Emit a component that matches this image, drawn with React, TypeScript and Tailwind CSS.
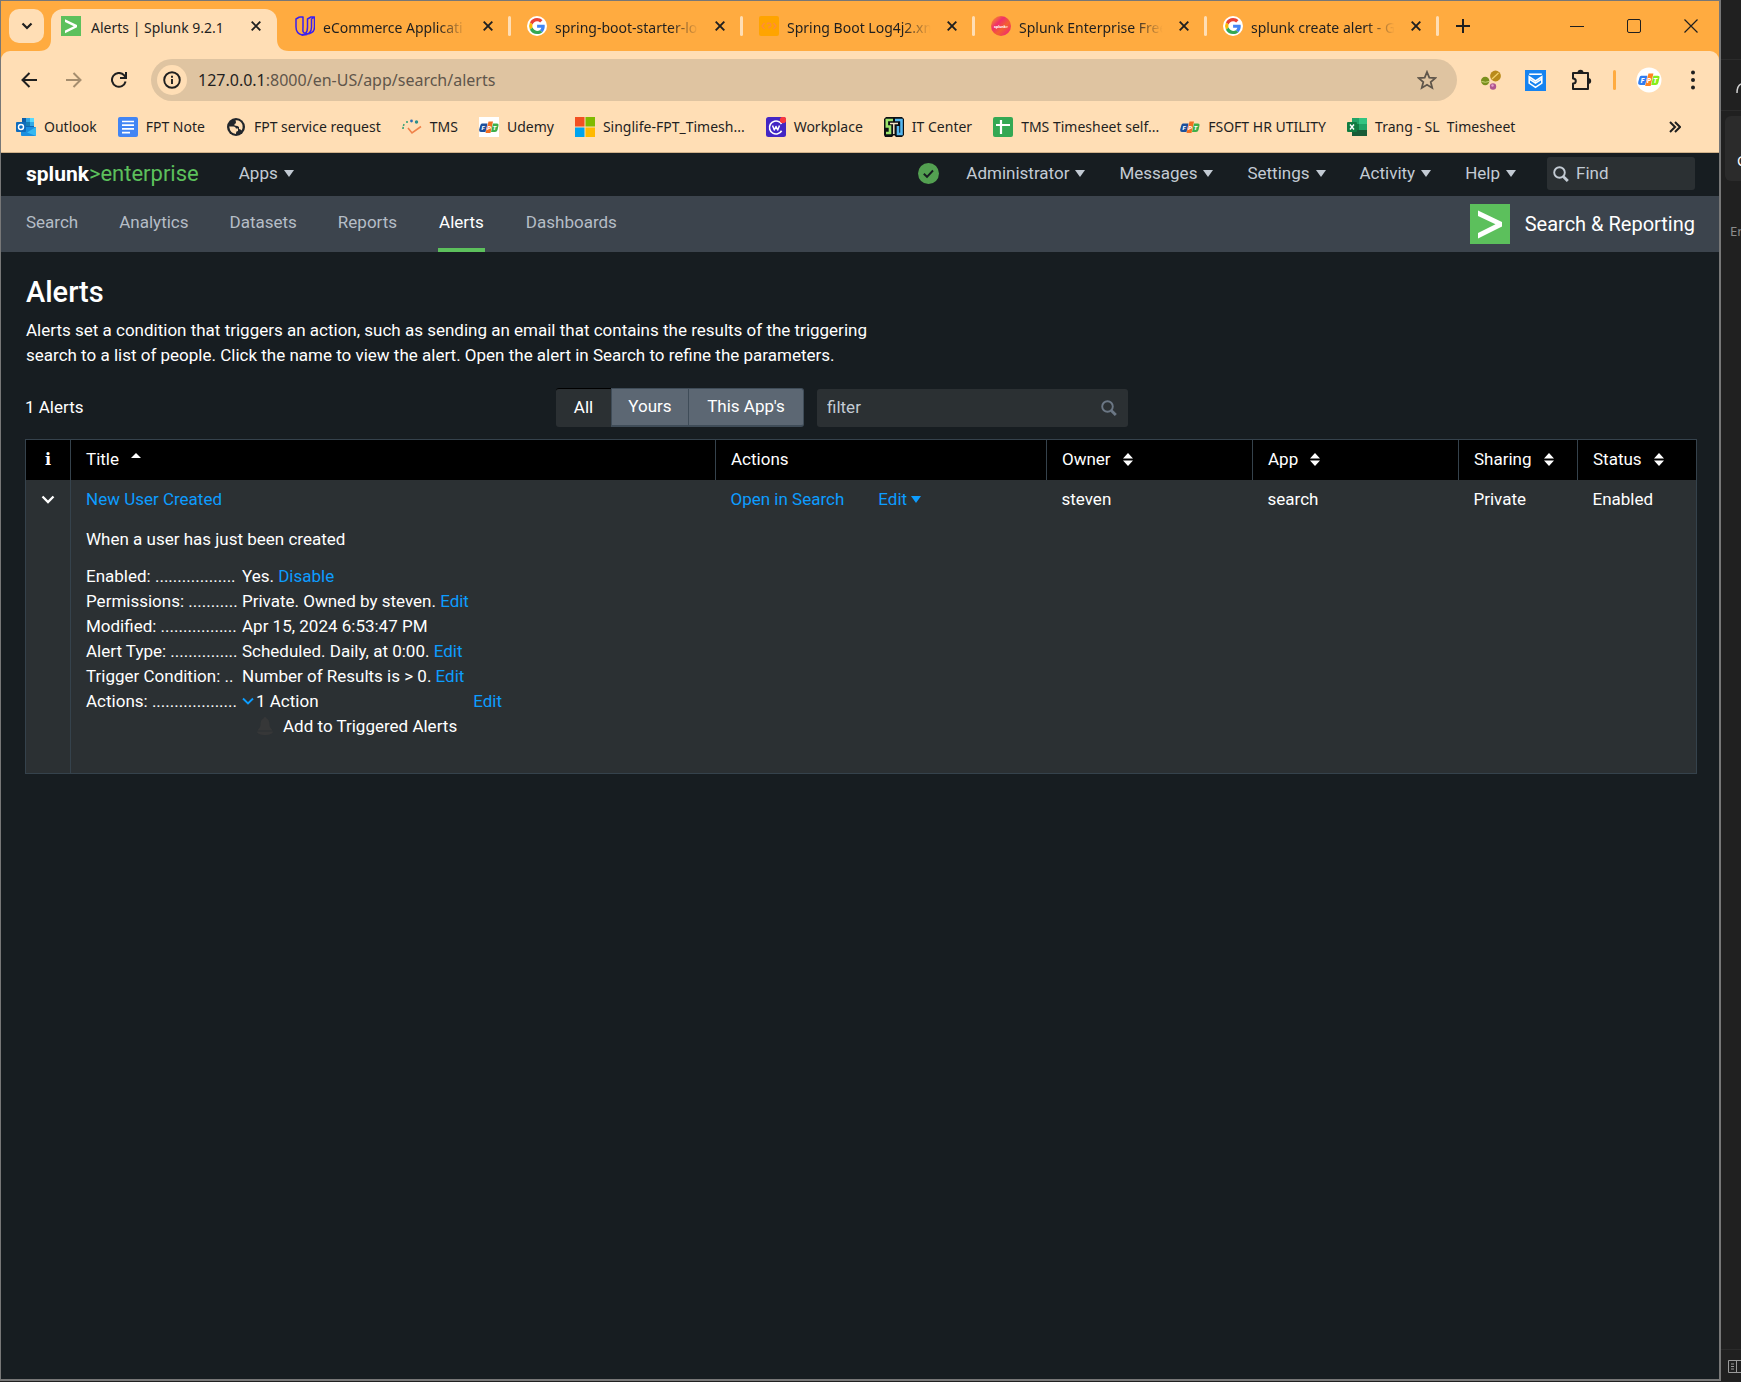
import type { ReactNode } from "react";

type Svg = { className?: string };

/* ---------- favicons and browser glyphs ---------- */

function SplunkIcon({ className }: Svg) {
  return (
    <svg viewBox="0 0 40 40" className={className} aria-hidden="true">
      <rect width="40" height="40" fill="#5cc05c" />
      <path d="M8 6.500 32 18v4.500L8 34.500v-5.500L25.500 20.300 8 12z" fill="#fff" />
    </svg>
  );
}

function UdacityIcon({ className }: Svg) {
  return (
    <svg viewBox="0 0 20 20" className={className} fill="none" stroke="#3a1ff0" strokeWidth="1.500" strokeLinejoin="round" aria-hidden="true">
      <path d="M4.500 1 1 3v8c0 4 2.500 7 6 8l3.500-1.800C7 16.500 8 14.500 8 10.500V1H4.500" />
      <path d="M7 19c7 .5 9.500-3.500 9.500-7.800V3L19.500 1H16l-3.500 2v8c0 3-.5 5-2 6.200M19.500 1v10c0 4-3 7-9 7" />
    </svg>
  );
}

function GoogleIcon({ className }: Svg) {
  return (
    <svg viewBox="0 0 48 48" className={className} aria-hidden="true">
      <circle cx="24" cy="24" r="24" fill="#fff" />
      <g transform="translate(5 5) scale(0.8)">
        <path fill="#EA4335" d="M24 9.500c3.500 0 6.700 1.200 9.200 3.600l6.900-6.900C35.900 2.400 30.500 0 24 0 14.600 0 6.500 5.400 2.600 13.200l8 6.200C12.400 13.700 17.700 9.500 24 9.500z" />
        <path fill="#4285F4" d="M47 24.600c0-1.600-.2-3.100-.4-4.600H24v9h12.900c-.6 3-2.300 5.500-4.800 7.200l7.700 6C44.400 38 47 31.800 47 24.600z" />
        <path fill="#FBBC05" d="M10.500 28.600A14.500 14.500 0 0 1 10.500 19.400l-8-6.200a24 24 0 0 0 0 21.600z" />
        <path fill="#34A853" d="M24 48c6.500 0 11.900-2.100 15.900-5.800l-7.700-6c-2.200 1.500-4.900 2.300-8.200 2.300-6.300 0-11.600-4.200-13.500-9.900l-8 6.200C6.500 42.600 14.600 48 24 48z" />
      </g>
    </svg>
  );
}

function CodeIcon({ className }: Svg) {
  return (
    <svg viewBox="0 0 20 20" className={className} aria-hidden="true">
      <rect width="20" height="20" rx="2" fill="#ffa400" />
      <g fill="none" stroke="#ff8c3c" strokeWidth="1.300">
        <path d="M5.500 7 3 10l2.500 3M14.500 7l2.500 3-2.500 3M8 8.500a2 2 0 1 1 2 2.500v1.500" />
      </g>
    </svg>
  );
}

function SplunkRoundIcon({ className }: Svg) {
  return (
    <svg viewBox="0 0 20 20" className={className} aria-hidden="true">
      <defs>
        <linearGradient id="splunk-round" x1="0" y1="0" x2="1" y2="1">
          <stop offset="0.050" stopColor="#f99d1c" />
          <stop offset="0.350" stopColor="#f0306a" />
          <stop offset="0.600" stopColor="#f4602f" />
          <stop offset="1" stopColor="#f0148c" />
        </linearGradient>
      </defs>
      <circle cx="10" cy="10" r="10" fill="url(#splunk-round)" />
      <text x="10" y="11.500" fontSize="4" fontWeight="700" fill="#fff" textAnchor="middle" fontFamily="Roboto">splunk&gt;</text>
    </svg>
  );
}

function OutlookIcon({ className }: Svg) {
  return (
    <svg viewBox="0 0 20 20" className={className} aria-hidden="true">
      <rect x="6" y="1" width="12" height="10" fill="#1066b5" />
      <rect x="6" y="1" width="4" height="5" fill="#0f5ea8" />
      <rect x="10" y="1" width="4" height="4" fill="#32a9e7" />
      <rect x="14" y="1" width="4" height="4" fill="#58d9fd" />
      <rect x="10" y="5" width="4" height="4" fill="#167eb4" />
      <rect x="14" y="5" width="4" height="4" fill="#32a9e7" />
      <path d="M5 10h15v8a1 1 0 0 1-1 1H6a1 1 0 0 1-1-1z" fill="#1b8fe0" />
      <path d="m20 10-9 5.500L20 19z" fill="#35b8f1" />
      <rect x="0" y="5" width="10" height="10" rx="1" fill="#0f6cbd" />
      <circle cx="5" cy="10" r="2.500" fill="none" stroke="#fff" strokeWidth="1.400" />
    </svg>
  );
}

function DocsIcon({ className }: Svg) {
  return (
    <svg viewBox="0 0 20 20" className={className} aria-hidden="true">
      <rect width="20" height="20" rx="2" fill="#4285f4" />
      <path d="M4 4.500h12M4 8.200h12M4 11.900h12M4 15.600h8" stroke="#fff" strokeWidth="1.700" />
    </svg>
  );
}

function GlobeIcon({ className }: Svg) {
  return (
    <svg viewBox="0 0 20 20" className={className} aria-hidden="true">
      <circle cx="10" cy="10" r="9" fill="#22262b" />
      <path d="M3.200 9.500h4.300q2 0 2.500 2h2v2.500q-2 0-2 2v1Q4 16.500 3.200 9.500zM9.500 3.300q5.500-.3 7 4.700.6 3.500-.8 5.500-1-1.500-2.700-1.500v-2q-1-1.500-4.500-1.500V7q1.500 0 1.500-1.700z" fill="#ffdeb5" />
    </svg>
  );
}

function TmsIcon({ className }: Svg) {
  return (
    <svg viewBox="0 0 20 20" className={className} fill="none" aria-hidden="true">
      <path d="M1 12c0-2 .5-4 1.500-5.500" stroke="#2e9e73" strokeWidth="1.500" strokeDasharray="2 1" />
      <circle cx="5" cy="5" r="1" fill="#2e9e73" />
      <circle cx="9.500" cy="4" r="1.400" fill="#2f6fb3" />
      <circle cx="14.500" cy="5" r="1.700" fill="#2b8f8a" />
      <path d="m6 11 4 5 9-6.500" stroke="#f0824a" strokeWidth="1.600" />
    </svg>
  );
}

function FptMark({ bright }: { bright?: boolean }) {
  return (
    <>
      <path d="M3 6.500h5.500L6.500 15H2.500Q-.5 15 .3 12l1-3.500Q1.700 6.500 3 6.500z" fill={bright ? "#2f7cf0" : "#1b4f9c"} />
      <path d="M9.500 4.500H14L11.500 16H6.500z" fill={bright ? "#ff8420" : "#f26f21"} />
      <path d="M14 6.500h4q2 0 1.500 2l-1 4.500q-.5 2-2.500 2h-4z" fill={bright ? "#86ee1c" : "#3fae49"} />
      <g fontFamily="Roboto" fontStyle="italic" fontWeight="900" fontSize="6" fill="#fff">
        <text x="2.500" y="12.800">F</text>
        <text x="8.200" y="12.800">P</text>
        <text x="13.800" y="12.800">T</text>
      </g>
    </>
  );
}

function FptIcon({ className, plate }: Svg & { plate?: boolean }) {
  return (
    <svg viewBox="0 0 20 20" className={className} aria-hidden="true">
      {plate && <rect width="20" height="20" fill="#fff" />}
      <FptMark />
    </svg>
  );
}

function MicrosoftIcon({ className }: Svg) {
  return (
    <svg viewBox="0 0 20 20" className={className} aria-hidden="true">
      <rect width="9.500" height="9.500" fill="#f25022" />
      <rect x="10.500" width="9.500" height="9.500" fill="#7fba00" />
      <rect y="10.500" width="9.500" height="9.500" fill="#00a4ef" />
      <rect x="10.500" y="10.500" width="9.500" height="9.500" fill="#ffb900" />
    </svg>
  );
}

function WorkplaceIcon({ className }: Svg) {
  return (
    <svg viewBox="0 0 20 20" className={className} aria-hidden="true">
      <rect width="20" height="20" rx="2.500" fill="#4326c4" />
      <circle cx="10" cy="10.500" r="6.500" fill="none" stroke="#fff" strokeWidth="1.600" strokeDasharray="33 8" transform="rotate(30 10 10.500)" />
      <path d="m6.500 8.500 1.800 4.500L10 9.500l1.700 3.500 1.800-4.500" fill="none" stroke="#fff" strokeWidth="1.500" strokeLinejoin="round" />
      <circle cx="17" cy="3" r="3.200" fill="#fa383e" />
    </svg>
  );
}

function ItCenterIcon({ className }: Svg) {
  return (
    <svg viewBox="0 0 20 20" className={className} fill="none" aria-hidden="true">
      <path d="M2 0h16l2 2v16l-2 2h-6l-2-2-2 2H1l-1-2V2z" fill="#0c0f12" />
      <path d="M9 3H2.800v6.500H6V16H2" stroke="#9be36b" strokeWidth="2.600" />
      <path d="M11 3h6.500v14H14V9" stroke="#56b7f0" strokeWidth="2.600" />
      <path d="M6 6.500h8M9.800 7v10" stroke="#f2e3c6" strokeWidth="1.500" />
    </svg>
  );
}

function SheetIcon({ className }: Svg) {
  return (
    <svg viewBox="0 0 20 20" className={className} aria-hidden="true">
      <rect width="20" height="20" rx="2" fill="#34a853" />
      <path d="M8 3v14M3 8h14" stroke="#fff" strokeWidth="2.200" />
    </svg>
  );
}

function ExcelIcon({ className }: Svg) {
  return (
    <svg viewBox="0 0 20 20" className={className} aria-hidden="true">
      <path d="M5 1h8v6H5z" fill="#21a366" />
      <path d="M12 1h8v6h-8z" fill="#33c481" />
      <path d="M5 7h8v6H5z" fill="#107c41" />
      <path d="M12 7h8v6h-8z" fill="#21a366" />
      <path d="M5 13h15v6H5z" fill="#185c37" />
      <rect y="5" width="10" height="10" rx="1" fill="#107c41" />
      <path d="m3 7.500 4 5M7 7.500l-4 5" stroke="#fff" strokeWidth="1.400" />
    </svg>
  );
}

function Cross({ className }: Svg) {
  return (
    <svg viewBox="0 0 10 10" className={className} fill="none" stroke="#1f1f1f" strokeWidth="1.900" aria-hidden="true">
      <path d="m.7.7 8.600 8.600M9.300.7.7 9.300" />
    </svg>
  );
}

function Caret() {
  return (
    <svg viewBox="0 0 10 7" className="h-[7px] w-[10px]" fill="currentColor" aria-hidden="true">
      <path d="M0 0h10L5 7z" />
    </svg>
  );
}

function SearchGlyph({ className }: Svg) {
  return (
    <svg viewBox="0 0 16 16" className={className} fill="none" stroke="currentColor" aria-hidden="true">
      <circle cx="6.500" cy="6.500" r="5.300" strokeWidth="1.900" />
      <path d="m10.500 10.800 4.300 4.200" strokeWidth="2.900" />
    </svg>
  );
}

function SortGlyph() {
  return (
    <svg viewBox="0 0 10 13" className="h-[13px] w-[10px]" fill="currentColor" aria-hidden="true">
      <path d="M0 5.500 5 0l5 5.500zM0 7.500h10L5 13z" />
    </svg>
  );
}

/* ---------- browser chrome ---------- */

const tabs: { title: string; icon: ReactNode }[] = [
  { title: "eCommerce Applicati", icon: <UdacityIcon className="size-5" /> },
  { title: "spring-boot-starter-lo", icon: <GoogleIcon className="size-5" /> },
  { title: "Spring Boot Log4j2.xm", icon: <CodeIcon className="size-5" /> },
  { title: "Splunk Enterprise Free", icon: <SplunkRoundIcon className="size-5" /> },
  { title: "splunk create alert - G", icon: <GoogleIcon className="size-5" /> },
];

function TabStrip() {
  return (
    <div className="flex h-[50px] bg-[#ffab40] pt-2 pl-2">
      <button aria-label="Search tabs" className="flex h-[34px] w-[35px] shrink-0 items-center justify-center rounded-[10px] bg-[#ffdeb5]">
        <svg viewBox="0 0 12 8" className="h-2 w-3" fill="none" stroke="#1f1f1f" strokeWidth="2.200" aria-hidden="true">
          <path d="m1.500 1.500 4.500 4.500 4.500-4.500" />
        </svg>
      </button>
      <div className="relative ml-[7px] flex h-[42px] w-[226px] shrink-0 items-center rounded-t-[12px] bg-[#ffdeb5] pr-3 pb-2 pl-[10px]">
        <svg viewBox="0 0 12 12" className="absolute bottom-0 -left-3 size-3" fill="#ffdeb5" aria-hidden="true"><path d="M12 0v12H0Q12 12 12 0z" /></svg>
        <svg viewBox="0 0 12 12" className="absolute -right-3 bottom-0 size-3" fill="#ffdeb5" aria-hidden="true"><path d="M0 0v12h12Q0 12 0 0z" /></svg>
        <SplunkIcon className="size-5 shrink-0" />
        <span className="ml-[10px] flex-1 pt-[3px] whitespace-nowrap text-[14px] leading-5">Alerts | Splunk 9.2.1</span>
        <button aria-label="Close tab" className="p-1"><Cross className="size-[10px]" /></button>
      </div>
      {tabs.map((t) => (
        <div key={t.title} className="flex h-[34px] w-[232px] shrink items-center pl-[18px]">
          <span className="shrink-0">{t.icon}</span>
          <span className="ml-2 w-[148px] shrink-0 pt-[3px] whitespace-nowrap text-[14px] leading-5 [mask-image:linear-gradient(to_right,black_78%,transparent_97%)]">
            {t.title}
          </span>
          <button aria-label={`Close ${t.title}`} className="ml-2 p-1"><Cross className="size-[10px]" /></button>
          <span className="-mr-[2px] ml-auto h-5 w-[3px] rounded bg-[#ffdeb5]" />
        </div>
      ))}
      <button aria-label="New tab" className="ml-[14px] flex h-[34px] w-6 items-center justify-center">
        <svg viewBox="0 0 14 14" className="size-[14px]" stroke="#1f1f1f" strokeWidth="2" aria-hidden="true"><path d="M7 0v14M0 7h14" /></svg>
      </button>
      <div className="ml-auto flex h-[34px] items-center gap-[43px] pr-[21px]">
        <button aria-label="Minimize">
          <svg viewBox="0 0 14 14" className="size-[14px]" stroke="#1f1f1f" aria-hidden="true"><path d="M0 7.500h14" /></svg>
        </button>
        <button aria-label="Maximize">
          <svg viewBox="0 0 14 14" className="size-[14px]" fill="none" stroke="#1f1f1f" aria-hidden="true"><rect x=".5" y=".5" width="13" height="13" rx="1.500" /></svg>
        </button>
        <button aria-label="Close">
          <svg viewBox="0 0 14 14" className="size-[14px]" stroke="#1f1f1f" strokeWidth="1.200" aria-hidden="true"><path d="m.5.5 13 13M13.500.5l-13 13" /></svg>
        </button>
      </div>
    </div>
  );
}

function Toolbar() {
  return (
    <div className="bg-[#ffab40]">
      <div className="flex items-center rounded-t-[9px] bg-[#ffdeb5] py-2 pr-4 pl-5">
        <div className="flex gap-[29px]">
          <button aria-label="Back">
            <svg viewBox="0 0 16 16" className="size-4" fill="none" stroke="#1f1f1f" strokeWidth="2" aria-hidden="true"><path d="M16 8H2M8.500 1 1.500 8l7 7" /></svg>
          </button>
          <button aria-label="Forward">
            <svg viewBox="0 0 16 16" className="size-4" fill="none" stroke="#a58d6e" strokeWidth="2" aria-hidden="true"><path d="M0 8h14M7.500 1l7 7-7 7" /></svg>
          </button>
          <button aria-label="Reload">
            <svg viewBox="0 0 16 16" className="size-4" fill="none" stroke="#1f1f1f" strokeWidth="2" aria-hidden="true">
              <path d="M14.600 9.500A6.900 6.900 0 1 1 13 3.200L14.500 5" />
              <path d="M15 0v6H9" />
            </svg>
          </button>
        </div>
        <div className="ml-6 flex h-[42px] flex-1 items-center rounded-full bg-[#dfc4a1] pr-5 pl-[6px]">
          <span className="flex size-[30px] shrink-0 items-center justify-center rounded-full bg-[#ffdeb5]">
            <svg viewBox="0 0 18 18" className="size-[18px]" fill="none" stroke="#1f1f1f" strokeWidth="1.900" aria-hidden="true">
              <circle cx="9" cy="9" r="7.800" />
              <path d="M9 8v5M9 4.800v2" />
            </svg>
          </span>
          <div className="ml-[11px] flex-1 text-[16px] leading-6">
            <span>127.0.0.1</span><span className="text-[#5f564b]">:8000/en-US/app/search/alerts</span>
          </div>
          <button aria-label="Bookmark this tab">
            <svg viewBox="0 0 20 20" className="size-5" fill="none" stroke="#5f564b" strokeWidth="1.800" aria-hidden="true">
              <path d="m10 2 2.300 5.600 6 .5-4.600 3.900 1.500 5.900-5.200-3.200-5.200 3.200 1.500-5.900L1.700 8.100l6-.5z" />
            </svg>
          </button>
        </div>
        <div className="ml-6 flex items-center">
          <svg viewBox="0 0 20 20" className="size-5" aria-hidden="true">
            <circle cx="4.200" cy="11" r="4.200" fill="#7a8f1d" /><path d="M.5 11.500q4 1.500 7.500 0" stroke="#c9d676" fill="none" />
            <circle cx="14.500" cy="6" r="5.400" fill="#b98a1a" /><path d="m11 9 6.500-6" stroke="#f3d06a" strokeWidth="1.300" />
            <circle cx="12" cy="16.500" r="3.200" fill="#b0568f" /><circle cx="11.500" cy="15.500" r="1.200" fill="#e3a3cd" />
          </svg>
          <svg viewBox="0 0 20 20" className="ml-6 size-[21px]" aria-hidden="true">
            <rect width="20" height="20" fill="#1683f0" />
            <path d="M4 4h12" stroke="#fff" strokeWidth="1.500" />
            <path d="M4 6.500v6l6 4 6-4v-6l-6 4zM4.500 9l5.500 3.500L15.500 9" fill="none" stroke="#fff" strokeWidth="1.500" />
          </svg>
          <button aria-label="Extensions" className="ml-6">
            <svg viewBox="0 0 22 22" className="size-[22px]" fill="none" stroke="#1f1f1f" strokeWidth="2" strokeLinejoin="round" aria-hidden="true">
              <path d="M3 4h15v16H3v-5.500q2.800 0 2.800-2.500T3 9.500z" />
              <path d="M8.500 4a2 2.200 0 0 1 4 0zM18 10a2.200 2 0 0 1 0 4z" fill="#1f1f1f" />
            </svg>
          </button>
          <span className="ml-[21px] h-5 w-[3px] rounded bg-[#ffab40]" />
          <button aria-label="Profile" className="ml-5">
            <svg viewBox="0 0 26 26" className="size-[26px]" aria-hidden="true">
              <circle cx="13" cy="13" r="12.500" fill="#fff" />
              <g transform="translate(2 1.500) scale(1.100)"><FptMark bright /></g>
            </svg>
          </button>
          <button aria-label="Menu" className="ml-[21px]">
            <svg viewBox="0 0 20 20" className="size-5" fill="#1f1f1f" aria-hidden="true">
              <circle cx="10" cy="2.500" r="2" /><circle cx="10" cy="10" r="2" /><circle cx="10" cy="17.500" r="2" />
            </svg>
          </button>
        </div>
      </div>
    </div>
  );
}

const bookmarks: { label: string; icon: ReactNode }[] = [
  { label: "Outlook", icon: <OutlookIcon className="size-5" /> },
  { label: "FPT Note", icon: <DocsIcon className="size-5" /> },
  { label: "FPT service request", icon: <GlobeIcon className="size-5" /> },
  { label: "TMS", icon: <TmsIcon className="size-5" /> },
  { label: "Udemy", icon: <FptIcon className="size-5" plate /> },
  { label: "Singlife-FPT_Timesh...", icon: <MicrosoftIcon className="size-5" /> },
  { label: "Workplace", icon: <WorkplaceIcon className="size-5" /> },
  { label: "IT Center", icon: <ItCenterIcon className="size-5" /> },
  { label: "TMS Timesheet self...", icon: <SheetIcon className="size-5" /> },
  { label: "FSOFT HR UTILITY", icon: <FptIcon className="size-5" /> },
  { label: "Trang - SL  Timesheet", icon: <ExcelIcon className="size-5" /> },
];

function BookmarksBar() {
  return (
    <div className="flex h-[44px] items-center border-b border-[#cfb18a] bg-[#ffdeb5] pr-[38px] pb-2 pl-[15px]">
      <nav className="flex gap-[21px]">
        {bookmarks.map((b) => (
          <a key={b.label} href="#" className="flex items-center gap-2 whitespace-pre text-[14px] leading-5">
            {b.icon}
            {b.label}
          </a>
        ))}
      </nav>
      <button aria-label="More bookmarks" className="ml-auto">
        <svg viewBox="0 0 12 12" className="size-3" fill="none" stroke="#1f1f1f" strokeWidth="2" aria-hidden="true">
          <path d="m1 1 5 5-5 5M6 1l5 5-5 5" />
        </svg>
      </button>
    </div>
  );
}

/* ---------- Splunk page ---------- */

function SplunkHeader() {
  return (
    <header className="flex h-[43px] items-center bg-[#171d21] pr-6 pb-[2px] pl-[25px] text-[#c3cbd4]">
      <a href="#" className="text-[22px] leading-none text-[#5cc05c]">
        <span className="font-bold text-[21px] text-white">splunk</span>&gt;enterprise
      </a>
      <button className="ml-10 flex items-center gap-[6px]">Apps <Caret /></button>
      <div className="ml-auto flex items-center gap-[34px]">
        <svg viewBox="0 0 21 21" className="-mr-[7px] size-[21px]" aria-label="Health status" role="img">
          <circle cx="10.500" cy="10.500" r="10.500" fill="#53a051" />
          <path d="m5.800 10.800 3.200 3L15 7.500" fill="none" stroke="#171d21" strokeWidth="1.900" />
        </svg>
        {["Administrator", "Messages", "Settings", "Activity", "Help"].map((m) => (
          <button key={m} className="flex items-center gap-[6px]">{m} <Caret /></button>
        ))}
        <label className="-ml-[3px] flex h-[33px] w-[148px] items-center gap-[7px] rounded-[3px] bg-[#2b3033] px-[6px]">
          <SearchGlyph className="size-4 shrink-0" />
          <span className="sr-only">Find</span>
          <input type="text" placeholder="Find" className="w-full min-w-0 bg-transparent outline-none placeholder:text-[#c3cbd4]" />
        </label>
      </div>
    </header>
  );
}

function AppNav() {
  return (
    <nav className="flex h-14 items-center bg-[#3c444d] pr-6 pl-[25px] text-[#b5bdc6]">
      <div className="flex h-full gap-[41px]">
        {["Search", "Analytics", "Datasets", "Reports", "Alerts", "Dashboards"].map((l) =>
          l === "Alerts" ? (
            <a key={l} href="#" aria-current="page" className="border-b-4 border-[#5cc05c] px-px pt-[14px] text-white">{l}</a>
          ) : (
            <a key={l} href="#" className="pt-[14px]">{l}</a>
          ),
        )}
      </div>
      <div className="ml-auto flex items-center gap-[15px] text-[20px] text-white">
        <SplunkIcon className="size-10" />
        Search &amp; Reporting
      </div>
    </nav>
  );
}

const link = "text-[#0d9dff]";
const th = "border-l border-[#35424c] pl-[15px] text-left font-normal";

const details: { label: string; value: string; action?: string }[] = [
  { label: "Enabled: ..................", value: "Yes.", action: "Disable" },
  { label: "Permissions: ...........", value: "Private. Owned by steven.", action: "Edit" },
  { label: "Modified: .................", value: "Apr 15, 2024 6:53:47 PM" },
  { label: "Alert Type: ...............", value: "Scheduled. Daily, at 0:00.", action: "Edit" },
  { label: "Trigger Condition: ..", value: "Number of Results is > 0.", action: "Edit" },
];

function Term({ label }: { label: string }) {
  return <dt className="w-[151px] shrink-0 whitespace-nowrap">{label}</dt>;
}

function AlertsTable() {
  return (
    <table className="mt-3 w-full table-fixed border-collapse border border-[#35424c] bg-[#2b3033] text-white">
      <colgroup>
        <col className="w-[45px]" />
        <col />
        <col className="w-[331px]" />
        <col className="w-[206px]" />
        <col className="w-[206px]" />
        <col className="w-[119px]" />
        <col className="w-[119px]" />
      </colgroup>
      <thead>
        <tr className="h-10 bg-black">
          <th className="text-center font-['DejaVu_Serif'] text-[16px] font-bold">i</th>
          <th className={th}>
            <button className="flex gap-3">
              Title
              <svg viewBox="0 0 10 5" className="mt-[6px] h-[5px] w-[10px]" fill="currentColor" aria-hidden="true"><path d="M0 5 5 0l5 5z" /></svg>
            </button>
          </th>
          <th className={th}>Actions</th>
          {["Owner", "App", "Sharing", "Status"].map((h) => (
            <th key={h} className={th}>
              <button className="flex items-center gap-3">{h} <SortGlyph /></button>
            </th>
          ))}
        </tr>
      </thead>
      <tbody>
        <tr className="h-[39px]">
          <td>
            <button aria-label="Collapse row" className="flex w-full justify-center">
              <svg viewBox="0 0 14 9" className="h-[9px] w-[14px]" fill="none" stroke="#fff" strokeWidth="2.300" aria-hidden="true"><path d="m1.500 1.500 5.500 5.500 5.500-5.500" /></svg>
            </button>
          </td>
          <td className="border-l border-[#35424c] pl-[15px]"><a href="#" className={link}>New User Created</a></td>
          <td className={`pl-[15px] ${link}`}>
            <div className="flex gap-[34px]">
              <a href="#">Open in Search</a>
              <button className="flex items-center gap-1">Edit <Caret /></button>
            </div>
          </td>
          <td className="pl-[15px]">steven</td>
          <td className="pl-[15px]">search</td>
          <td className="pl-[15px]">Private</td>
          <td className="pl-[15px]">Enabled</td>
        </tr>
        <tr>
          <td />
          <td colSpan={6} className="border-l border-[#35424c] pt-2 pb-[34px] pl-[15px]">
            <p>When a user has just been created</p>
            <dl className="mt-3">
              {details.map((d) => (
                <div key={d.label} className="flex gap-[5px]">
                  <Term label={d.label} />
                  <dd>
                    {d.value} {d.action && <a href="#" className={link}>{d.action}</a>}
                  </dd>
                </div>
              ))}
              <div className="flex gap-[5px]">
                <Term label="Actions: ..................." />
                <dd>
                  <div className="flex w-[260px] items-center">
                    <button className="flex items-center gap-[2px]">
                      <svg viewBox="0 0 12 8" className="h-2 w-3 text-[#0d9dff]" fill="none" stroke="currentColor" strokeWidth="1.900" aria-hidden="true"><path d="m1 1.500 5 5 5-5" /></svg>
                      1 Action
                    </button>
                    <a href="#" className={`ml-auto ${link}`}>Edit</a>
                  </div>
                  <div className="flex items-center gap-[10px] pl-[15px]">
                    <svg viewBox="0 0 16 18" className="h-[18px] w-4" fill="#363738" aria-hidden="true">
                      <path d="M8 0c1 0 1.500.8 1.500 1.500C12 2.500 12.500 5 12.500 8c0 2 1 3 3 5.500H.5C2.500 11 3.500 10 3.500 8c0-3 .5-5.500 3-6.500C6.500.8 7 0 8 0zM0 14.500h16c0 2-3.500 3.500-8 3.500s-8-1.500-8-3.500z" />
                    </svg>
                    Add to Triggered Alerts
                  </div>
                </dd>
              </div>
            </dl>
          </td>
        </tr>
      </tbody>
    </table>
  );
}

function Page() {
  return (
    <main className="flex-1 pt-[22px] pr-[22px] pl-6 text-white">
      <div className="pl-px">
        <h1 className="text-[29px] leading-9 font-medium">Alerts</h1>
        <p className="mt-2 max-w-[875px]">
          Alerts set a condition that triggers an action, such as sending an email that contains the results of the triggering search to a list of people. Click the name to view the alert. Open the alert in Search to refine the parameters.
        </p>
      </div>
      <div className="mt-5 flex items-center">
        <div className="w-[531px]">1 Alerts</div>
        <div className="flex h-[39px]">
          <button className="w-[55px] rounded-l-[3px] border-t border-black bg-[#2b3033] pb-[2px]">All</button>
          <button className="w-[78px] border border-b-2 border-[#3f4c58] bg-[#5c6773] pb-px">Yours</button>
          <button className="w-[115px] rounded-r-[3px] border border-b-2 border-l-0 border-[#3f4c58] bg-[#5c6773] pb-px">This App's</button>
        </div>
        <label className="ml-[13px] flex h-[38px] w-[311px] items-center rounded-[3px] bg-[#2b3033] pr-[11px] pl-[10px]">
          <span className="sr-only">filter</span>
          <input type="text" placeholder="filter" className="min-w-0 flex-1 bg-transparent outline-none placeholder:text-[#c3cbd4]" />
          <SearchGlyph className="size-4 text-[#6b7785]" />
        </label>
      </div>
      <AlertsTable />
    </main>
  );
}

/* Sliver of the dark window behind the browser. */
function BackWindow() {
  return (
    <aside className="flex w-5 shrink-0 flex-col overflow-hidden bg-[#202020] font-['Noto_Sans',sans-serif] text-[14px] text-[#8c8c8c]">
      <div className="h-[60px] border-b border-[#2b2b2b]" />
      <div className="flex h-[51px] items-end justify-end border-b border-[#2b2b2b] pb-[17px]">
        <svg viewBox="0 0 5 10" className="h-[10px] w-[5px]" fill="none" stroke="#d0d0d0" strokeWidth="1.500" aria-hidden="true"><path d="M1 10Q1 3 5 1" /></svg>
      </div>
      <div className="mt-[5px] ml-1 h-[65px] rounded-l-[6px] bg-[#2b2b2b] pt-[35px] pl-[12px] leading-5 text-white">C</div>
      <div className="mt-10 pl-[9px] text-[13px] leading-5 whitespace-nowrap">En</div>
      <div className="mt-auto flex h-[33px] items-center justify-end border-t border-[#2b2b2b]">
        <svg viewBox="0 0 13 13" className="size-[13px]" fill="none" stroke="#9a9a9a" aria-hidden="true"><path d="M13 .5H.5v12H13M8.500.5v12M3 4h3M3 6.500h3M3 9h3" /></svg>
      </div>
    </aside>
  );
}

export default function App() {
  return (
    <div className="flex min-h-screen bg-[#202020]">
      <div className="mb-px flex min-w-0 flex-1 flex-col border-t border-r-2 border-b-2 border-l border-[#777777] bg-[#171d21]">
        <div className="font-['Noto_Sans',sans-serif] text-[#1f1f1f]">
          <TabStrip />
          <Toolbar />
          <BookmarksBar />
        </div>
        <div className="flex flex-1 flex-col font-['Roboto',sans-serif] text-[17px] leading-[25px]">
          <SplunkHeader />
          <AppNav />
          <Page />
        </div>
      </div>
      <BackWindow />
    </div>
  );
}
